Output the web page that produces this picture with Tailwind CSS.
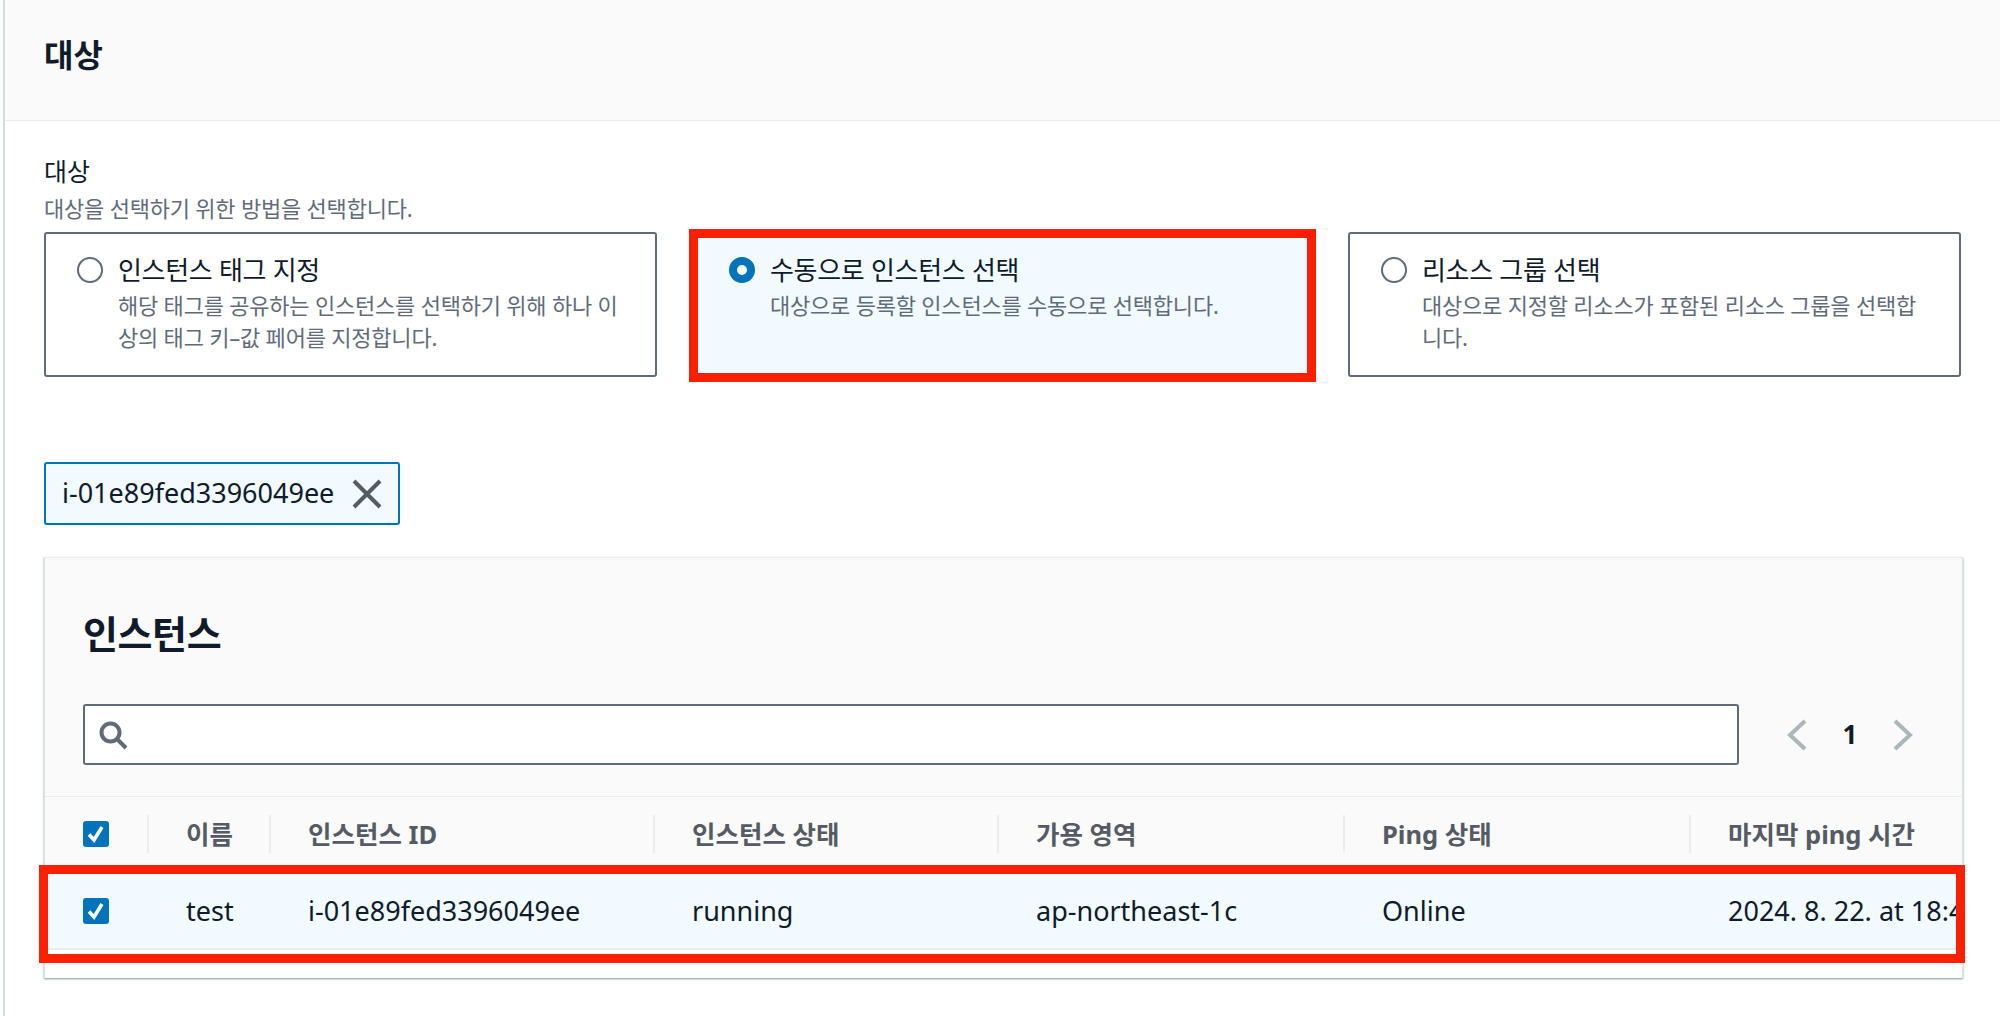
<!doctype html>
<html>

<head>
    <meta charset="UTF-8">
    <meta name="viewport" content="width=device-width, initial-scale=1.0">
    <script src="https://cdn.jsdelivr.net/npm/@tailwindcss/browser@4"></script>
</head>

<body class="bg-white overflow-hidden font-['Noto_Sans','Noto_Sans_CJK_KR',sans-serif] text-[#0f1b2a]">
    <div class="h-[1016px] w-[2000px] ml-[3px] border-l-2 border-[#d5dbdb]">

        <!-- header -->
        <div class="h-[121px] bg-[#fafafa] border-b border-[#e9ebed] pl-[39px] pt-[31px]">
            <h1 class="text-[32px] leading-[48px] font-bold">대상</h1>
        </div>

        <div class="pl-[39px] w-[1957px]">
            <p class="mt-[34px] text-[25px] leading-[32px]">대상</p>
            <p class="mt-[4px] text-[22px] leading-[34px] text-[#5f6b7a] tracking-[-0.2px]">대상을 선택하기 위한 방법을 선택합니다.</p>

            <!-- options -->
            <div class="grid grid-cols-[613px_613px_613px] gap-x-[39px] mt-[7px]">
                <div class="h-[145px] border-2 border-[#5f6b7a] rounded-[3px] pl-[31px] pt-[17px] flex gap-[15px]">
                    <span class="mt-[6px] shrink-0 size-[26px] rounded-full border-2 border-[#5f6b7a] bg-white"></span>
                    <div class="w-[508px]">
                        <p class="text-[26px] leading-[38px] tracking-[-0.3px]">인스턴스 태그 지정</p>
                        <p class="text-[22px] leading-[32px] text-[#5f6b7a] tracking-[-0.2px]">해당 태그를 공유하는 인스턴스를 선택하기 위해 하나 이상의 태그 키–값 페어를 지정합니다.</p>
                    </div>
                </div>
                <div class="relative h-[145px] bg-[#f1faff] pl-[33px] pt-[19px] flex gap-[15px]">
                    <span class="mt-[6px] shrink-0 size-[26px] rounded-full border-[8px] border-[#0073bb] bg-white"></span>
                    <div>
                        <p class="text-[26px] leading-[38px] tracking-[-0.3px]">수동으로 인스턴스 선택</p>
                        <p class="text-[22px] leading-[32px] text-[#5f6b7a] tracking-[-0.2px]">대상으로 등록할 인스턴스를 수동으로 선택합니다.</p>
                    </div>
                    <!-- red annotation -->
                    <div class="absolute -top-[3px] -bottom-[5px] -left-[7px] -right-[7px] border-[9px] border-[#fd2000]"></div>
                </div>
                <div class="h-[145px] border-2 border-[#5f6b7a] rounded-[3px] pl-[31px] pt-[17px] flex gap-[15px]">
                    <span class="mt-[6px] shrink-0 size-[26px] rounded-full border-2 border-[#5f6b7a] bg-white"></span>
                    <div class="w-[508px]">
                        <p class="text-[26px] leading-[38px] tracking-[-0.3px]">리소스 그룹 선택</p>
                        <p class="text-[22px] leading-[32px] text-[#5f6b7a] tracking-[-0.2px]">대상으로 지정할 리소스가 포함된 리소스 그룹을 선택합니다.</p>
                    </div>
                </div>
            </div>

            <!-- token -->
            <div class="mt-[85px] w-[356px] h-[63px] bg-[#f1faff] border-2 border-[#0073bb] rounded-[3px] flex items-center pl-[16px]">
                <span class="text-[27px] w-[289px] whitespace-nowrap">i-01e89fed3396049ee</span>
                <svg class="size-[32px]" viewBox="0 0 32 32" fill="none" stroke="#545b64" stroke-width="4"><path d="M3 3l26 26M29 3L3 29"/></svg>
            </div>

            <!-- instances panel -->
            <div class="mt-[32px] w-[1919px] h-[421px] border-x border-[#dfe2e2] border-t border-t-[#eaeded] shadow-[0_1px_2px_#879596] relative">
                <div class="h-[239px] bg-[#fafafa] border-b border-[#eaeded] pl-[38px]">
                    <h2 class="pt-[51px] text-[38px] leading-[48px] font-bold tracking-[-0.4px]">인스턴스</h2>
                    <div class="mt-[47px] flex items-center">
                        <div class="w-[1656px] h-[61px] bg-white border-2 border-[#5f6b7a] rounded-[3px] flex items-center pl-[13px]">
                            <svg class="size-[30px]" viewBox="0 0 30 30" fill="none" stroke="#5f6b7a" stroke-width="4"><circle cx="12.5" cy="12.5" r="9"/><path d="M19 19l9 9"/></svg>
                        </div>
                        <div class="flex items-center ml-[47px]">
                            <svg class="w-[22px] h-[32px]" viewBox="0 0 22 32" fill="none" stroke="#aab7b8" stroke-width="4"><path d="M19 2L4 16l15 14"/></svg>
                            <span class="w-[84px] text-center text-[26px] font-bold">1</span>
                            <svg class="w-[22px] h-[32px]" viewBox="0 0 22 32" fill="none" stroke="#aab7b8" stroke-width="4"><path d="M3 2l15 14L3 30"/></svg>
                        </div>
                    </div>
                </div>

                <!-- table header -->
                <div class="grid grid-cols-[102px_122px_384px_344px_346px_346px_1fr] h-[74px] bg-[#fafafa] items-center text-[25.5px] font-bold text-[#545b64] whitespace-nowrap overflow-hidden">
                    <div class="pl-[38px]">
                        <span class="size-[26px] rounded-[3px] bg-[#0073bb] flex items-center justify-center">
                            <svg class="size-[20px]" viewBox="0 0 20 20" fill="none" stroke="white" stroke-width="3.5"><path d="M3 10.5l5 5.5 8-13"/></svg>
                        </span>
                    </div>
                    <div class="pl-[37px] h-[38px] leading-[38px] border-l-2 border-[#eaeded]">이름</div>
                    <div class="pl-[37px] h-[38px] leading-[38px] border-l-2 border-[#eaeded]">인스턴스 ID</div>
                    <div class="pl-[37px] h-[38px] leading-[38px] border-l-2 border-[#eaeded]">인스턴스 상태</div>
                    <div class="pl-[37px] h-[38px] leading-[38px] border-l-2 border-[#eaeded]">가용 영역</div>
                    <div class="pl-[37px] h-[38px] leading-[38px] border-l-2 border-[#eaeded]">Ping 상태</div>
                    <div class="pl-[37px] h-[38px] leading-[38px] border-l-2 border-[#eaeded]">마지막 ping 시간</div>
                </div>

                <!-- selected row -->
                <div class="grid grid-cols-[102px_122px_384px_344px_346px_346px_1fr] h-[79px] pt-[3px] bg-[#f1faff] border-b-2 border-[#eaeded] items-center text-[27px] whitespace-nowrap overflow-hidden">
                    <div class="pl-[38px]">
                        <span class="size-[26px] rounded-[3px] bg-[#0073bb] flex items-center justify-center">
                            <svg class="size-[20px]" viewBox="0 0 20 20" fill="none" stroke="white" stroke-width="3.5"><path d="M3 10.5l5 5.5 8-13"/></svg>
                        </span>
                    </div>
                    <div class="pl-[39px]">test</div>
                    <div class="pl-[39px]">i-01e89fed3396049ee</div>
                    <div class="pl-[39px]">running</div>
                    <div class="pl-[39px]">ap-northeast-1c</div>
                    <div class="pl-[39px]">Online</div>
                    <div class="pl-[39px]">2024. 8. 22. at 18:4</div>
                </div>

                <!-- red annotation -->
                <div class="absolute left-[-6px] right-[-3px] top-[307px] h-[98px] border-[9px] border-[#fd2000]"></div>
            </div>
        </div>
    </div>
</body>

</html>
